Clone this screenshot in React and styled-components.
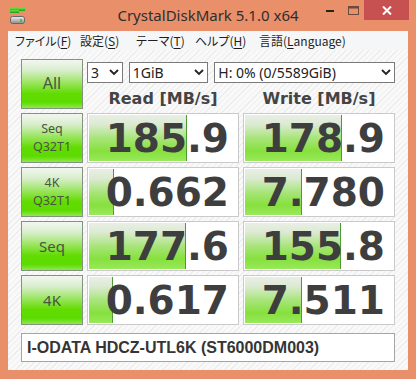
import React from 'react'
import styled, { createGlobalStyle } from 'styled-components'

const GlobalStyle = createGlobalStyle`
body{
margin:0;
}
#root{
width:416px;
height:379px;
}
`

const Window = styled.div`
width:416px;
height:379px;
box-sizing:border-box;
background-color:#e98f69;
display:flex;
flex-direction:column;
font-family:"Noto Sans", sans-serif;
`

const TitleBar = styled.div`
height:31px;
display:grid;
grid-template-columns:1fr auto 1fr;
align-items:start;
`

const AppIcon = styled.div`
padding:7px 0 0 10px;
`

const Title = styled.div`
font-size:15px;
line-height:30px;
color:#2e2e2e;
`

const Controls = styled.div`
display:flex;
justify-content:flex-end;
align-items:flex-start;
padding-right:7px;
`

const CtrlButton = styled.div`
width:${p => p.$w}px;
height:20px;
display:flex;
align-items:center;
justify-content:center;
background-color:${p => p.$close ? '#c75050' : 'transparent'};
`

const Client = styled.div`
flex:1;
margin:0 8px 9px 8px;
display:flex;
flex-direction:column;
`

const MenuBar = styled.div`
height:19px;
background-color:#f5f6f7;
display:flex;
align-items:center;
padding-left:7px;
font-family:"Noto Sans CJK JP", sans-serif;
font-feature-settings:"palt";
font-size:12px;
color:#1e1e1e;
`

const MenuItem = styled.div`
width:${p => p.$w ? p.$w + 'px' : 'auto'};
white-space:nowrap;
u{
text-underline-offset:2px;
}
`

const Content = styled.div`
flex:1;
background-color:#f8f8f8;
background-image:repeating-linear-gradient(135deg, #f9f9f9 0 3px, #ededed 3px 4px);
padding:9px 13px 0 13px;
display:flex;
flex-direction:column;
gap:8px;
`

const Grid = styled.div`
display:grid;
grid-template-columns:62px 152px 152px;
grid-auto-rows:50px;
column-gap:4px;
row-gap:4px;
`

const GreenButton = styled.div`
box-sizing:border-box;
border:1px solid #84937f;
background:linear-gradient(#f3f6f1 0%, #d8eecb 22%, #98e55c 48%, #62dc00 70%, #5cdb00 88%, #8fe84e 100%);
display:flex;
flex-direction:column;
align-items:center;
justify-content:center;
color:#4a5445;
font-size:${p => p.$size}px;
line-height:${p => p.$lh || 18}px;
padding-bottom:${p => p.$pb || 0}px;
`

const TopArea = styled.div`
grid-column:2 / 4;
display:flex;
flex-direction:column;
`

const SelectRow = styled.div`
display:flex;
margin-top:3px;
`

const Select = styled.div`
box-sizing:border-box;
width:${p => p.$w}px;
margin-right:${p => p.$mr || 0}px;
height:21px;
border:1px solid #7a7a7a;
background-color:#fff;
display:flex;
align-items:center;
justify-content:space-between;
padding:0 3px 0 3px;
font-size:14px;
color:#222;
`

const Headers = styled.div`
flex:1;
display:grid;
grid-template-columns:152px 152px;
column-gap:4px;
align-items:center;
`

const Header = styled.div`
text-align:center;
font-family:"DejaVu Sans", sans-serif;
font-weight:bold;
font-size:16px;
color:#444;
padding-top:4px;
`

const ValueBox = styled.div`
position:relative;
box-sizing:border-box;
border:1px solid #cacaca;
background-color:#fff;
display:flex;
align-items:center;
justify-content:flex-end;
padding-right:9px;
overflow:hidden;
`

const Bar = styled.div`
position:absolute;
left:1px;
top:1px;
bottom:1px;
background:linear-gradient(#e9eee6 0%, #dcead3 20%, #a9e57b 50%, #86e03d 78%, #98e95a 100%);
border-right:1px solid #4f9a34;
`

const Value = styled.span`
position:relative;
font-family:"DejaVu Sans", sans-serif;
font-weight:bold;
font-size:39px;
color:#3e3e3e;
line-height:1;
`

const ModelBox = styled.div`
box-sizing:border-box;
width:374px;
height:29px;
border:1px solid #a5a5a5;
background-color:#fff;
display:flex;
align-items:center;
padding-left:5px;
font-family:"Liberation Sans", sans-serif;
font-weight:bold;
font-size:16px;
color:#353535;
`

const Chevron = () => (
  <svg width="10" height="7" viewBox="0 0 10 7">
    <polyline points="1,1 5,5 9,1" fill="none" stroke="#222" strokeWidth="1.8" />
  </svg>
)

const DiskIcon = () => (
  <svg width="16" height="16" viewBox="0 0 16 16">
    <defs>
      <linearGradient id="gbar" x1="0" y1="0" x2="0" y2="1">
        <stop offset="0" stopColor="#6fe040" />
        <stop offset="1" stopColor="#1f9a1f" />
      </linearGradient>
      <linearGradient id="gdisk" x1="0" y1="0" x2="0" y2="1">
        <stop offset="0" stopColor="#f0f0f0" />
        <stop offset="1" stopColor="#8a8a8a" />
      </linearGradient>
    </defs>
    <rect x="0" y="0" width="15" height="3" fill="url(#gbar)" />
    <rect x="0" y="2" width="9" height="3" fill="url(#gbar)" />
    <rect x="0.5" y="8.5" width="14" height="7" rx="2" fill="url(#gdisk)" stroke="#666" />
    <rect x="10" y="11" width="2" height="3" fill="#2fcf2f" />
  </svg>
)

const rows = [
  { label: ['Seq', 'Q32T1'], read: '185.9', write: '178.9' },
  { label: ['4K', 'Q32T1'], read: '0.662', write: '7.780' },
  { label: ['Seq'], read: '177.6', write: '155.8' },
  { label: ['4K'], read: '0.617', write: '7.511' },
]

const barWidth = v => Math.max(0, Math.min(1, Math.log10(parseFloat(v) * 10) / 5)) * 148

function Cell({ value }) {
  return (
    <ValueBox>
      <Bar style={{ width: barWidth(value) }} />
      <Value>{value}</Value>
    </ValueBox>
  )
}

function App() {
  return (
    <>
      <GlobalStyle />
      <Window>
        <TitleBar>
          <AppIcon><DiskIcon /></AppIcon>
          <Title>CrystalDiskMark 5.1.0 x64</Title>
          <Controls>
            <CtrlButton $w={24}>
              <svg width="8" height="3"><rect x="0" y="1" width="8" height="2" fill="#222" /></svg>
            </CtrlButton>
            <CtrlButton $w={22}>
              <svg width="11" height="9"><rect x="0.5" y="0.5" width="10" height="8" fill="none" stroke="#6b4a3a" /><rect x="0.5" y="0.5" width="10" height="2" fill="#6b4a3a" /></svg>
            </CtrlButton>
            <CtrlButton $w={45} $close>
              <svg width="10" height="9" viewBox="0 0 10 9"><path d="M1 0.5 L9 8.5 M9 0.5 L1 8.5" stroke="#fff" strokeWidth="2" /></svg>
            </CtrlButton>
          </Controls>
        </TitleBar>
        <Client>
          <MenuBar>
            <MenuItem $w={65}>ファイル(<u>F</u>)</MenuItem>
            <MenuItem $w={56}>設定(<u>S</u>)</MenuItem>
            <MenuItem $w={59}>テーマ(<u>T</u>)</MenuItem>
            <MenuItem $w={64}>ヘルプ(<u>H</u>)</MenuItem>
            <MenuItem>言語(<u>L</u>anguage)</MenuItem>
          </MenuBar>
          <Content>
            <Grid>
              <GreenButton $size={16} $pb={2}>All</GreenButton>
              <TopArea>
                <SelectRow>
                  <Select $w={36} $mr={6}>3<Chevron /></Select>
                  <Select $w={80} $mr={6}>1GiB<Chevron /></Select>
                  <Select $w={182}>H: 0% (0/5589GiB)<Chevron /></Select>
                </SelectRow>
                <Headers>
                  <Header>Read [MB/s]</Header>
                  <Header>Write [MB/s]</Header>
                </Headers>
              </TopArea>
              {rows.map((r, i) => (
                <React.Fragment key={i}>
                  <GreenButton $size={r.label.length > 1 ? 12.5 : 15} $lh={r.label.length > 1 ? 18 : 20}>
                    {r.label.map(t => <span key={t}>{t}</span>)}
                  </GreenButton>
                  <Cell value={r.read} />
                  <Cell value={r.write} />
                </React.Fragment>
              ))}
            </Grid>
            <ModelBox>I-ODATA HDCZ-UTL6K (ST6000DM003)</ModelBox>
          </Content>
        </Client>
      </Window>
    </>
  )
}

export default App
